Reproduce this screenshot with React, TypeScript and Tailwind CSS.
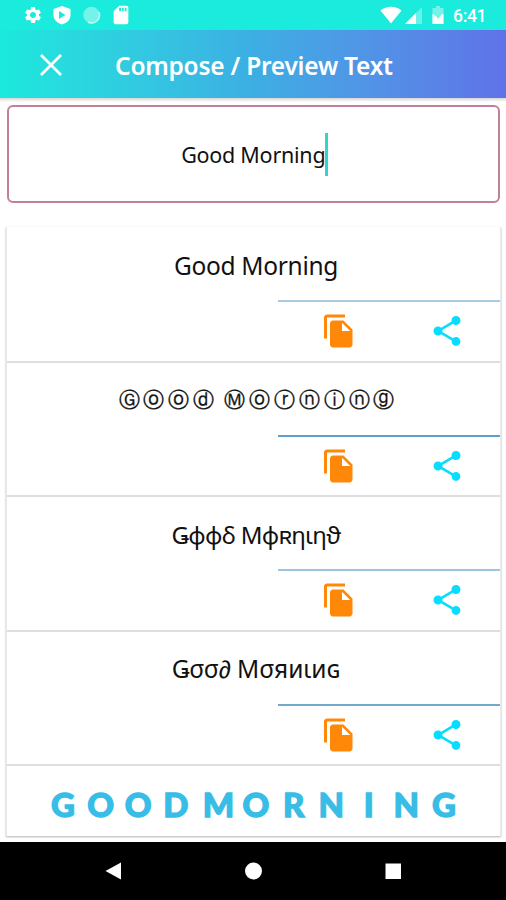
import { MdFileCopy, MdSdCard, MdSettings, MdShare } from "react-icons/md";

const rows = [
  { text: "Good Morning", style: "text-[24.500px] tracking-[-0.300px]", line: "bg-[#a9cbe2]" },
  { text: "Ⓖⓞⓞⓓ Ⓜⓞⓡⓝⓘⓝⓖ", circled: true, style: "", line: "bg-[#5f9fcb]" },
  { text: "Ǥϕϕδ Mϕʀηιηϑ", style: "text-[24px] tracking-[-0.700px]", line: "bg-[#9cc5de]" },
  { text: "Ǥσσ∂ Mσяиιиɢ", style: "text-[24.500px] tracking-[-0.100px]", line: "bg-[#72aace]" },
];

const banner = ["GOOD", "MORNING"];

function StatusBar() {
  return (
    <div className="flex h-[30px] items-center bg-[#1aebdc] pl-[23px] pr-[19px] text-white">
      <MdSettings className="size-[20px]" />
      <svg className="ml-[9px] h-[20px] w-[20px]" viewBox="0 0 20 20" fill="none">
        <path d="M10 1l8.500 3v6c0 4.600-3.500 8-8.500 9.500C5 18 1.500 14.600 1.500 10V4z" fill="#fff" />
        <path d="M7 6v8l6.500-4z" fill="#1aebdc" />
      </svg>
      <svg className="ml-[10px] h-[20px] w-[20px]" viewBox="0 0 20 20">
        <circle cx="9.500" cy="10" r="8.300" fill="#fff" fillOpacity=".4" />
        <path d="M16.800 7a7.800 7.800 0 0 1-11 10" fill="none" stroke="#fff" strokeOpacity=".6" strokeWidth="1.500" />
      </svg>
      <MdSdCard className="ml-[8px] size-[22px]" />
      <div className="flex-1" />
      <svg className="h-[18px] w-[22px]" viewBox="0 0 22 18" fill="#fff">
        <path d="M.500 4.500C6.500-.500 15.500-.500 21.500 4.500L11 17.500z" />
      </svg>
      <svg className="ml-[3px] h-[17px] w-[17px]" viewBox="0 0 17 17" fill="#fff">
        <path d="M0 17L17 0v17z" fillOpacity=".35" />
        <path d="M0 17L11 6v11z" />
      </svg>
      <svg className="ml-[10px] h-[18px] w-[12px]" viewBox="0 0 12 18" fill="#fff">
        <path d="M4 0h4v2h3.500v16H.500V2H4z" fillOpacity=".4" />
        <path d="M.500 8L4 10l2 3 4-5h1.500v10H.500z" />
      </svg>
      <span className="ml-[9px] w-[34px] whitespace-nowrap pt-[3px] font-[Roboto] text-[17.500px] font-medium leading-none tracking-[-0.300px]">
        6:41
      </span>
    </div>
  );
}

function Header() {
  return (
    <header className="flex h-[68px] items-center bg-linear-to-r from-[#1be9dc] via-[#3caee3] to-[#5f72e8] pl-[40px] text-white">
      <svg className="mt-[2px] h-[22px] w-[22px]" viewBox="0 0 22 22" fill="none" stroke="#fff" strokeWidth="2.700">
        <path d="M1 1l20 20M21 1L1 21" />
      </svg>
      <h1 className="ml-[53px] whitespace-nowrap pt-[5px] text-[24.500px] font-semibold tracking-[-0.250px]">
        Compose / Preview Text
      </h1>
    </header>
  );
}

function CircledText({ text }: { text: string }) {
  return (
    <div className="flex justify-center pl-px font-['DejaVu_Sans'] text-[21px] [-webkit-text-stroke:0.300px_#111]">
      {Array.from(text).map((ch, i) => (
        <span key={i} className={ch === " " ? "w-[6px] whitespace-pre" : "flex w-[24.900px] justify-center"}>
          {ch}
        </span>
      ))}
    </div>
  );
}

function TextRow({ row }: { row: (typeof rows)[number] }) {
  return (
    <li className="flex h-[134.500px] flex-col border-b-2 border-[#dedede]">
      <div className="flex h-[72px] items-center justify-center whitespace-nowrap pt-[4px] pl-[5px]">
        {row.circled ? <CircledText text={row.text} /> : <span className={row.style}>{row.text}</span>}
      </div>
      <div className="ml-auto w-[222px]">
        <div className={`h-[2px] ${row.line}`} />
        <div className="flex pt-[11px] pl-[42.500px]">
          <MdFileCopy className="size-[36px] text-[#ff8808]" />
          <MdShare className="ml-[72px] size-[36px] text-[#08dcff]" />
        </div>
      </div>
    </li>
  );
}

export default function App() {
  return (
    <div className="flex h-[900px] w-[506px] flex-col overflow-hidden bg-white font-['Noto_Sans',sans-serif] text-[#111]">
      <StatusBar />
      <Header />
      <div className="h-[4px] shrink-0 bg-linear-to-b from-[#d5d5d5] to-white" />

      <div className="mr-[6px] ml-[7px] mt-[3px] flex h-[98px] shrink-0 items-center justify-center rounded-[6px] border-2 border-[#c08099] pl-[2px]">
        <span className="whitespace-nowrap pt-[3px] text-[21.500px] tracking-[-0.250px]">Good Morning</span>
        <span className="h-[43px] w-[2.500px] bg-[#32d5c8]" />
      </div>

      <ul className="mr-[5px] ml-[6px] mt-[24px] h-[609px] shrink-0 border-x border-[#e8e8e8] pt-px shadow-[0_1px_2px_rgba(0,0,0,0.3)]">
        {rows.map((row) => (
          <TextRow key={row.text} row={row} />
        ))}
        <li className="flex h-[70px] items-center justify-center gap-[5px] pt-[6px] font-[Lato] text-[33px] font-black leading-none text-[#38bde6] [-webkit-text-stroke:1.300px_#38bde6]">
          {banner.map((word) => (
            <div key={word} className="flex">
              {word.split("").map((ch, i) => (
                <span key={i} className="w-[37.600px] text-center">
                  {ch}
                </span>
              ))}
            </div>
          ))}
        </li>
      </ul>

      <nav className="mt-auto flex h-[58px] shrink-0 items-center bg-black pl-[105px]">
        <svg className="h-[18px] w-[288px] overflow-visible" viewBox="0 0 288 18" fill="#fff">
          <path d="M0.500 9L16 .500v17z" />
          <circle cx="148.500" cy="9" r="8.500" />
          <path d="M280.500 1.500h15.500v15.500h-15.500z" />
        </svg>
      </nav>
    </div>
  );
}
